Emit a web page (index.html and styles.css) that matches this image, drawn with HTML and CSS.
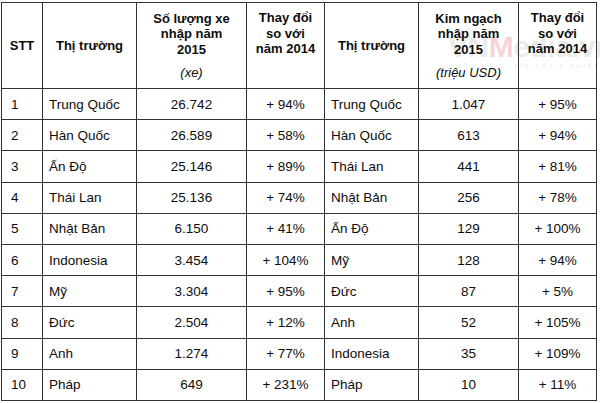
FILE: index.html
```html
<!DOCTYPE html>
<html lang="vi">
<head>
<meta charset="utf-8">
<title>Nhập khẩu xe 2015</title>
<link rel="stylesheet" href="styles.css">
</head>
<body>
<div class="wrap">
  <div class="watermark" aria-hidden="true">
    <span class="wm-top">BÁO ĐIỆN TỬ</span>
    <span class="wm-logo"><span class="wm-vn">VN</span><span class="wm-m">M</span><span class="wm-rest">edia.vn</span></span>
    <span class="wm-slogan">CẦU NỐI · TIN CẬY &amp; THIẾT THỰC</span>
  </div>
  <table class="data">
    <colgroup>
      <col class="c-stt"><col class="c-mkt"><col class="c-num"><col class="c-chg">
      <col class="c-mkt"><col class="c-val"><col class="c-chg">
    </colgroup>
    <thead>
      <tr class="head">
        <th>STT</th>
        <th>Thị trường</th>
        <th><div class="hl">Số lượng xe<br>nhập năm<br>2015</div><div class="unit">(xe)</div></th>
        <th class="top"><div class="hl">Thay đổi<br>so với<br>năm 2014</div></th>
        <th>Thị trường</th>
        <th><div class="hl">Kim ngạch<br>nhập năm<br>2015</div><div class="unit">(triệu USD)</div></th>
        <th class="top"><div class="hl">Thay đổi<br>so với<br>năm 2014</div></th>
      </tr>
    </thead>
    <tbody>
      <tr><td class="stt">1</td><td class="mkt">Trung Quốc</td><td class="ctr">26.742</td><td class="ctr">+ 94%</td><td class="mkt">Trung Quốc</td><td class="ctr">1.047</td><td class="ctr">+ 95%</td></tr>
      <tr><td class="stt">2</td><td class="mkt">Hàn Quốc</td><td class="ctr">26.589</td><td class="ctr">+ 58%</td><td class="mkt">Hàn Quốc</td><td class="ctr">613</td><td class="ctr">+ 94%</td></tr>
      <tr><td class="stt">3</td><td class="mkt">Ấn Độ</td><td class="ctr">25.146</td><td class="ctr">+ 89%</td><td class="mkt">Thái Lan</td><td class="ctr">441</td><td class="ctr">+ 81%</td></tr>
      <tr><td class="stt">4</td><td class="mkt">Thái Lan</td><td class="ctr">25.136</td><td class="ctr">+ 74%</td><td class="mkt">Nhật Bản</td><td class="ctr">256</td><td class="ctr">+ 78%</td></tr>
      <tr><td class="stt">5</td><td class="mkt">Nhật Bản</td><td class="ctr">6.150</td><td class="ctr">+ 41%</td><td class="mkt">Ấn Độ</td><td class="ctr">129</td><td class="ctr">+ 100%</td></tr>
      <tr><td class="stt">6</td><td class="mkt">Indonesia</td><td class="ctr">3.454</td><td class="ctr">+ 104%</td><td class="mkt">Mỹ</td><td class="ctr">128</td><td class="ctr">+ 94%</td></tr>
      <tr><td class="stt">7</td><td class="mkt">Mỹ</td><td class="ctr">3.304</td><td class="ctr">+ 95%</td><td class="mkt">Đức</td><td class="ctr">87</td><td class="ctr">+ 5%</td></tr>
      <tr><td class="stt">8</td><td class="mkt">Đức</td><td class="ctr">2.504</td><td class="ctr">+ 12%</td><td class="mkt">Anh</td><td class="ctr">52</td><td class="ctr">+ 105%</td></tr>
      <tr><td class="stt">9</td><td class="mkt">Anh</td><td class="ctr">1.274</td><td class="ctr">+ 77%</td><td class="mkt">Indonesia</td><td class="ctr">35</td><td class="ctr">+ 109%</td></tr>
      <tr><td class="stt">10</td><td class="mkt">Pháp</td><td class="ctr">649</td><td class="ctr">+ 231%</td><td class="mkt">Pháp</td><td class="ctr">10</td><td class="ctr">+ 11%</td></tr>
    </tbody>
  </table>
</div>
</body>
</html>
```

FILE: styles.css
```css
html, body {
  margin: 0;
  padding: 0;
  background: #fff;
  overflow: hidden;
}

body {
  font-family: "Liberation Sans", Arial, sans-serif;
  color: #0d0d0d;
}

.wrap {
  position: relative;
  width: 600px;
  height: 403px;
  padding: 2px 0 0 1px;
  box-sizing: border-box;
  overflow: hidden;
}

.data {
  position: relative;
  z-index: 1;
  border-collapse: collapse;
  table-layout: fixed;
  width: 596px;
  background: transparent;
}

.c-stt { width: 41px; }
.c-mkt { width: 94px; }
.c-num { width: 110px; }
.c-chg { width: 78px; }
.c-val { width: 100px; }

.data th,
.data td {
  border: 1px solid #333;
  padding: 0;
}

.head {
  height: 86px;
}

.head th {
  font-weight: bold;
  font-size: 13px;
  text-align: center;
  vertical-align: middle;
  line-height: 15.5px;
}

.head th.top {
  vertical-align: top;
  padding-top: 7px;
}

.unit {
  margin-top: 7.5px;
  font-weight: normal;
  font-style: italic;
}

tbody tr {
  height: 31.2px;
}

tbody td {
  font-size: 13.5px;
  vertical-align: middle;
}

td.stt {
  padding-left: 9px;
}

td.mkt {
  padding-left: 6px;
}

td.ctr {
  text-align: center;
}

.watermark {
  position: absolute;
  left: 448px;
  top: 27px;
  z-index: 0;
  display: flex;
  flex-direction: column;
  white-space: nowrap;
  opacity: 0.2;
}

.wm-top {
  font-size: 6px;
  line-height: 7px;
  color: #999;
  letter-spacing: 1px;
}

.wm-logo {
  font-size: 30px;
  font-weight: bold;
  line-height: 26px;
  letter-spacing: -0.5px;
}

.wm-vn { color: #9a9a9a; }
.wm-m { color: #e0303a; }
.wm-rest { color: #9a9a9a; }

.wm-slogan {
  font-size: 6px;
  line-height: 7px;
  margin-top: 3px;
  color: #888;
  letter-spacing: 2.6px;
  margin-left: 9px;
}
```
